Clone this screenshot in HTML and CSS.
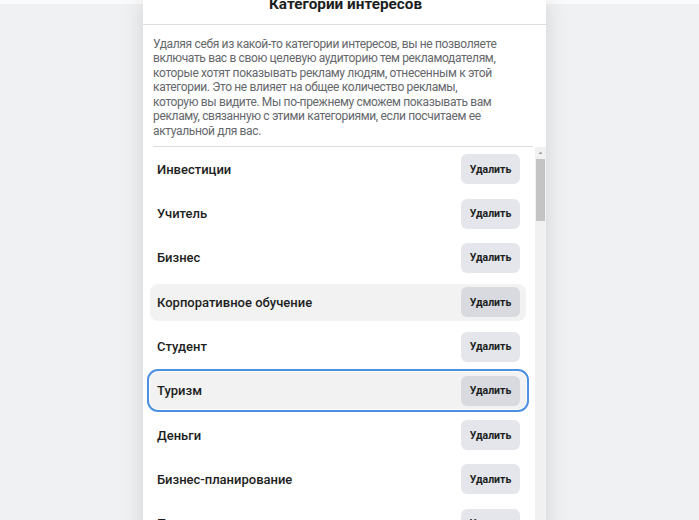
FILE: index.html
```html
<!DOCTYPE html>
<html lang="ru">
<head>
<meta charset="utf-8">
<title>Категории интересов</title>
<link rel="stylesheet" href="styles.css">
</head>
<body>
<div class="topstrip"></div>
<div class="page">
  <div class="modal">
    <div class="modal-header">
      <h2 class="modal-title">Категории интересов</h2>
    </div>
    <p class="desc">Удаляя себя из какой-то категории интересов, вы не позволяете<br>
включать вас в свою целевую аудиторию тем рекламодателям,<br>
которые хотят показывать рекламу людям, отнесенным к этой<br>
категории. Это не влияет на общее количество рекламы,<br>
которую вы видите. Мы по-прежнему сможем показывать вам<br>
рекламу, связанную с этими категориями, если посчитаем ее<br>
актуальной для вас.</p>
    <div class="divider"></div>
    <div class="list-wrap">
      <ul class="list">
        <li class="item"><div class="row"><span class="label">Инвестиции</span><button class="btn">Удалить</button></div></li>
        <li class="item"><div class="row"><span class="label">Учитель</span><button class="btn">Удалить</button></div></li>
        <li class="item"><div class="row"><span class="label">Бизнес</span><button class="btn">Удалить</button></div></li>
        <li class="item"><div class="row hover"><span class="label">Корпоративное обучение</span><button class="btn">Удалить</button></div></li>
        <li class="item"><div class="row"><span class="label">Студент</span><button class="btn">Удалить</button></div></li>
        <li class="item"><div class="row focus"><span class="label">Туризм</span><button class="btn">Удалить</button></div></li>
        <li class="item"><div class="row"><span class="label">Деньги</span><button class="btn">Удалить</button></div></li>
        <li class="item"><div class="row"><span class="label">Бизнес-планирование</span><button class="btn">Удалить</button></div></li>
        <li class="item"><div class="row"><span class="label">Путешествия</span><button class="btn">Удалить</button></div></li>
      </ul>
      <div class="scrollbar">
        <div class="sb-arrow"><svg width="11" height="10" viewBox="0 0 11 10"><path d="M3.5 6 L5.5 3.5 L7.5 6 Z" fill="#a3a3a3"/></svg></div>
        <div class="sb-thumb"></div>
      </div>
    </div>
  </div>
</div>
</body>
</html>
```
FILE: styles.css
```css
html, body {
  margin: 0;
  padding: 0;
  height: 100%;
  overflow: hidden;
}
body {
  background: #f0f1f3;
  font-family: Roboto, "Noto Sans", "Liberation Sans", sans-serif;
  color: #1c1e21;
}
.topstrip {
  height: 4px;
  background: #fbfbfb;
}
.page {
  margin-top: -4px;
  padding-left: 143px;
  display: flex;
}
.modal {
  width: 403px;
  background: #ffffff;
  box-shadow: 0 0 22px rgba(0, 0, 0, 0.13);
  display: flex;
  flex-direction: column;
}
.modal-header {
  height: 24px;
  border-bottom: 1px solid #dadde1;
  display: flex;
  align-items: flex-end;
  justify-content: center;
  overflow: hidden;
}
.modal-title {
  margin: 0 0 10.5px;
  font-size: 15.3px;
  line-height: 20px;
  font-weight: 700;
  color: #1c1e21;
  padding-left: 2px;
}
.desc {
  margin: 11.75px 6px 0 10px;
  font-size: 12px;
  line-height: 14.5px;
  letter-spacing: -0.35px;
  color: #65676b;
}
.divider {
  height: 1px;
  background: #dadde1;
  margin: 8px 13px 0 10px;
}
.list-wrap {
  display: flex;
  height: 420px;
}
.list {
  flex: 1;
  list-style: none;
  margin: 0;
  padding: 0 0 0 4px;
}
.scrollbar {
  width: 11px;
  background: #f1f1f1;
  display: flex;
  flex-direction: column;
  align-items: center;
}
.sb-arrow {
  height: 12px;
  display: flex;
  align-items: center;
}
.sb-thumb {
  width: 9px;
  height: 62px;
  background: #c4c4c4;
}
.item {
  padding: 3.65px 9px 3.65px 3px;
}
.row {
  height: 37px;
  border-radius: 8px;
  padding: 0 6px 0 7px;
  display: flex;
  align-items: center;
  justify-content: space-between;
}
.label {
  font-size: 13px;
  font-weight: 500;
  color: #1c1e21;
}
.btn {
  width: 59px;
  height: 30px;
  border: 0;
  border-radius: 6px;
  background: #e4e6eb;
  font-family: inherit;
  font-size: 10.5px;
  font-weight: 700;
  color: #1c1e21;
  padding: 0;
}
.row.hover,
.row.focus {
  background: #f2f2f2;
}
.row.hover .btn,
.row.focus .btn {
  background: #d8dadf;
}
.row.focus {
  outline: 2px solid #4d8fe0;
  outline-offset: 1px;
}
```
